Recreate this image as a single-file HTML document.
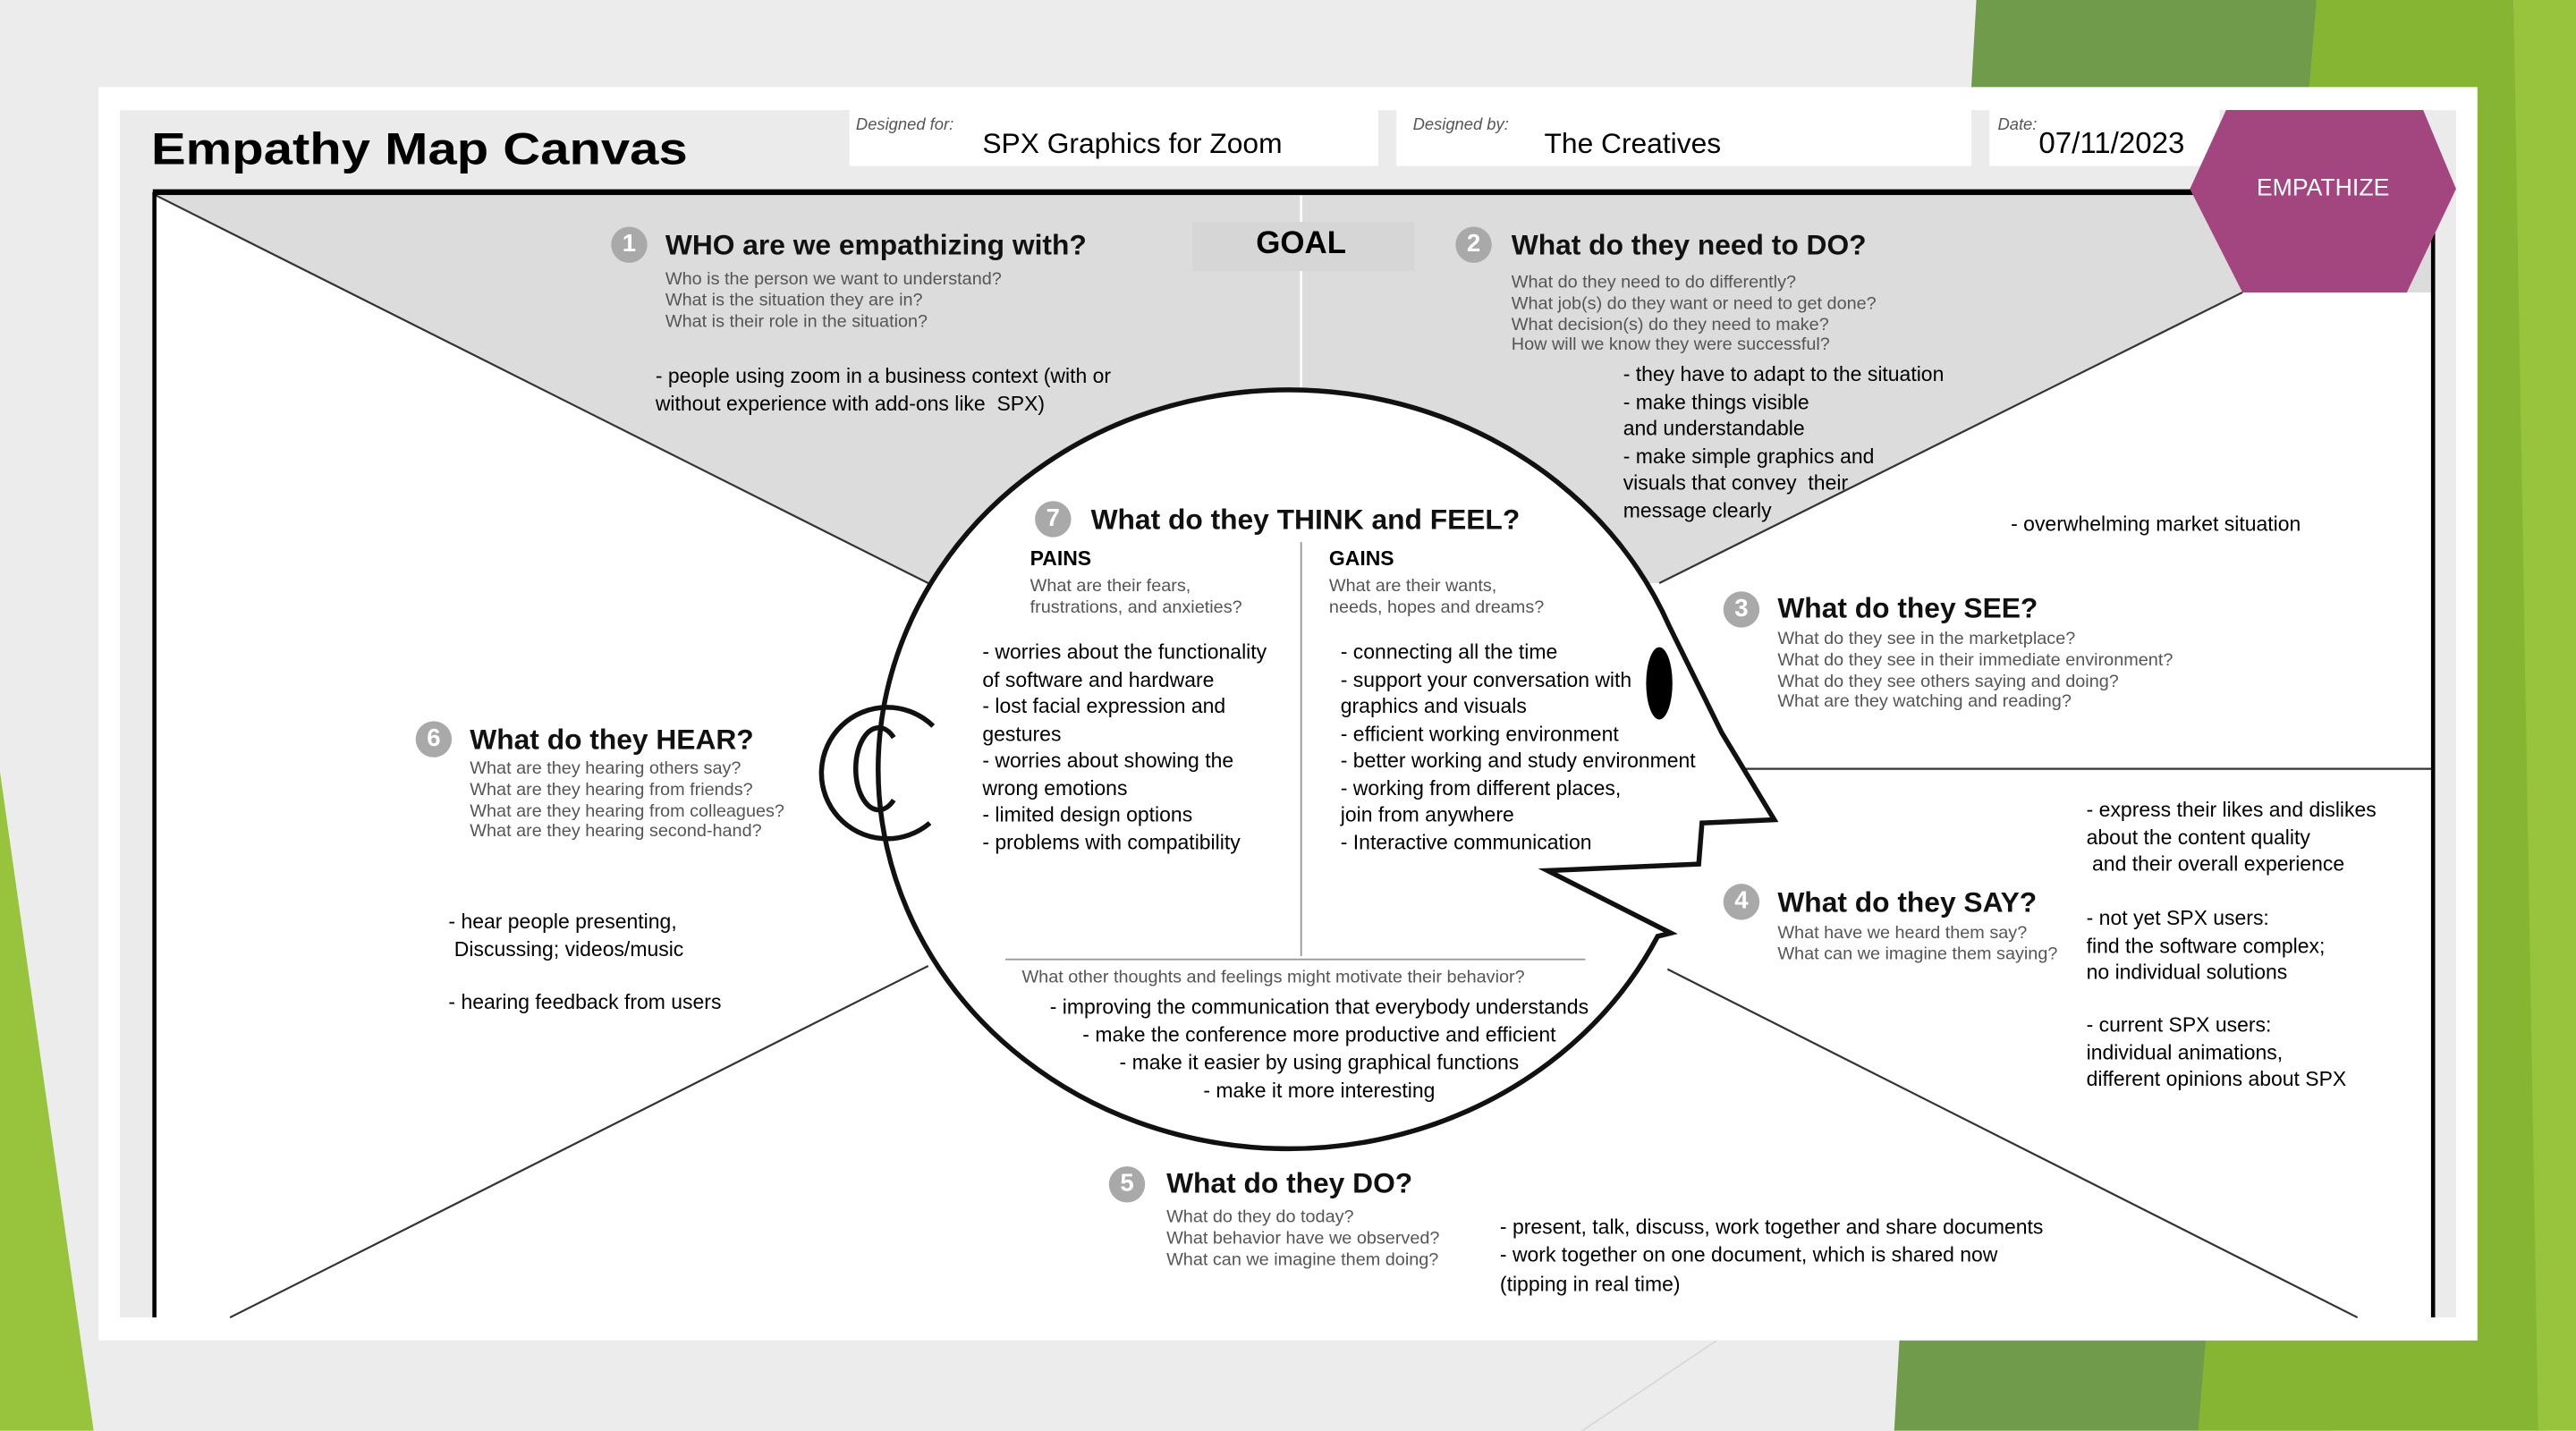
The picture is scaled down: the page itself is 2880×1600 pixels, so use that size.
<!DOCTYPE html>
<html><head><meta charset="utf-8"><style>
html,body{margin:0;padding:0;width:2880px;height:1599px;overflow:hidden;background:#ececec}
#s{position:absolute;left:0;top:0;width:1568px;height:871px;transform:scale(1.83673);transform-origin:0 0;font-family:"Liberation Sans",sans-serif}
.t{position:absolute;white-space:nowrap;line-height:13px}
.h{font-size:17.3px;font-weight:bold;color:#111;line-height:20px}
.q{font-size:10.8px;color:#555;line-height:12.8px}
.b{font-size:12.5px;color:#000;line-height:16.5px}
.n{position:absolute;width:22px;height:22px;border-radius:50%;background:#a9a9a9;color:#fff;font-weight:bold;font-size:15px;line-height:22px;text-align:center}
.lab{font-size:10px;font-style:italic;color:#555}
</style></head><body><div id="s">
<svg width="1568" height="871" style="position:absolute;left:0;top:0">
<polygon points="1203,0 1410,0 1420,871 1153,871" fill="#6f9b4b"/>
<polygon points="1410,0 1530,0 1550,871 1338,871" fill="#86b534"/>
<polygon points="1530,0 1568,0 1568,871 1545,871" fill="#97c43c"/>
<polygon points="0,470 57,871 0,871" fill="#97c43c"/>
<line x1="1045" y1="816" x2="963" y2="871" stroke="#d8d8d8" stroke-width="1"/>
<rect x="60" y="53" width="1448" height="763" fill="#fff"/>
<rect x="73" y="67" width="1422" height="735" fill="#ebebeb"/>
<rect x="517" y="67" width="322" height="34" fill="#fff"/>
<rect x="850" y="67" width="350" height="34" fill="#fff"/>
<rect x="1211" y="67" width="140" height="34" fill="#fff"/>
<rect x="94" y="118" width="1387" height="684" fill="#fff"/>
<polygon points="95,119 1480,119 1480,178 1365,178 1010,355 565,355" fill="#dcdcdc"/>
<line x1="792" y1="119" x2="792" y2="250" stroke="#fff" stroke-width="1.5"/>
<rect x="726" y="135" width="135" height="30" fill="#d6d6d6"/>
<line x1="95" y1="119" x2="565" y2="355" stroke="#333" stroke-width="1.2"/>
<line x1="1365" y1="178" x2="1010" y2="355" stroke="#333" stroke-width="1.2"/>
<line x1="565" y1="588" x2="140" y2="802" stroke="#333" stroke-width="1.2"/>
<line x1="1015" y1="590" x2="1435" y2="802" stroke="#333" stroke-width="1.2"/>
<line x1="1060" y1="468" x2="1480" y2="468" stroke="#333" stroke-width="1.2"/>
<path d="M1016,381 L1048,446 L1080,499 L1036,501 L1034,526 L942,530 L1017,568 L1009,570 A250,231 0 1 1 1016,381 Z" fill="#fff" stroke="#111" stroke-width="3" stroke-linejoin="miter"/>
<line x1="792" y1="330" x2="792" y2="582" stroke="#999" stroke-width="1"/>
<line x1="612" y1="584" x2="965" y2="584" stroke="#999" stroke-width="1"/>
<ellipse cx="1010" cy="416" rx="8" ry="22" fill="#000"/>
<path d="M568,442 A40,40 0 1 0 566,501" fill="none" stroke="#111" stroke-width="3"/>
<path d="M544,449 A14,25 0 1 0 544,487" fill="none" stroke="#111" stroke-width="3"/>
<line x1="93" y1="117" x2="1340" y2="117" stroke="#000" stroke-width="3.5"/>
<line x1="94" y1="117" x2="94" y2="802" stroke="#000" stroke-width="2.5"/>
<line x1="1481" y1="140" x2="1481" y2="802" stroke="#000" stroke-width="2.5"/>
<polygon points="1355,67 1475,67 1495,115 1465,178 1365,178 1333,115" fill="#a3467f"/>
</svg>
<div class="t" style="left:92px;top:75px;font-size:27px;font-weight:bold;line-height:32px;transform:scaleX(1.17);transform-origin:0 0">Empathy Map Canvas</div>
<div class="t lab" style="left:521px;top:70px">Designed for:</div>
<div class="t" style="left:598px;top:77px;font-size:17.3px;line-height:20px">SPX Graphics for Zoom</div>
<div class="t lab" style="left:860px;top:70px">Designed by:</div>
<div class="t" style="left:940px;top:77px;font-size:17.3px;line-height:20px">The Creatives</div>
<div class="t lab" style="left:1216px;top:70px">Date:</div>
<div class="t" style="left:1241px;top:77px;font-size:18px;line-height:20px">07/11/2023</div>
<div class="t" style="left:1333px;width:162px;text-align:center;top:106px;font-size:14.5px;line-height:18px;color:#fff">EMPATHIZE</div>

<div class="n" style="left:372px;top:138px">1</div>
<div class="t h" style="left:405px;top:139px">WHO are we empathizing with?</div>
<div class="t q" style="left:405px;top:164px">Who is the person we want to understand?<br>What is the situation they are in?<br>What is their role in the situation?</div>
<div class="t b" style="left:399px;top:221px">- people using zoom in a business context (with or<br>without experience with add-ons like&nbsp; SPX)</div>
<div class="t" style="left:726px;width:132px;text-align:center;top:138px;font-size:19px;font-weight:bold;line-height:22px">GOAL</div>

<div class="n" style="left:886px;top:138px">2</div>
<div class="t h" style="left:920px;top:139px">What do they need to DO?</div>
<div class="t q" style="left:920px;top:166px">What do they need to do differently?<br>What job(s) do they want or need to get done?<br>What decision(s) do they need to make?<br>How will we know they were successful?</div>
<div class="t b" style="left:988px;top:220px">- they have to adapt to the situation<br>- make things visible<br>and understandable<br>- make simple graphics and<br>visuals that convey&nbsp; their<br>message clearly</div>
<div class="t b" style="left:1224px;top:311px">- overwhelming market situation</div>

<div class="n" style="left:630px;top:305px">7</div>
<div class="t h" style="left:664px;top:306px">What do they THINK and FEEL?</div>
<div class="t" style="left:627px;top:334px;font-size:12.5px;font-weight:bold">PAINS</div>
<div class="t q" style="left:627px;top:351px">What are their fears,<br>frustrations, and anxieties?</div>
<div class="t" style="left:809px;top:334px;font-size:12.5px;font-weight:bold">GAINS</div>
<div class="t q" style="left:809px;top:351px">What are their wants,<br>needs, hopes and dreams?</div>
<div class="t b" style="left:598px;top:389px">- worries about the functionality<br>of software and hardware<br>- lost facial expression and<br>gestures<br>- worries about showing the<br>wrong emotions<br>- limited design options<br>- problems with compatibility</div>
<div class="t b" style="left:816px;top:389px">- connecting all the time<br>- support your conversation with<br>graphics and visuals<br>- efficient working environment<br>- better working and study environment<br>- working from different places,<br>join from anywhere<br>- Interactive communication</div>
<div class="t q" style="left:622px;top:589px">What other thoughts and feelings might motivate their behavior?</div>
<div class="t b" style="left:590px;width:426px;text-align:center;top:605px;line-height:17px">- improving the communication that everybody understands<br>- make the conference more productive and efficient<br>- make it easier by using graphical functions<br>- make it more interesting</div>

<div class="n" style="left:1049px;top:360px">3</div>
<div class="t h" style="left:1082px;top:360px">What do they SEE?</div>
<div class="t q" style="left:1082px;top:383px">What do they see in the marketplace?<br>What do they see in their immediate environment?<br>What do they see others saying and doing?<br>What are they watching and reading?</div>

<div class="n" style="left:253px;top:439px">6</div>
<div class="t h" style="left:286px;top:440px">What do they HEAR?</div>
<div class="t q" style="left:286px;top:462px">What are they hearing others say?<br>What are they hearing from friends?<br>What are they hearing from colleagues?<br>What are they hearing second-hand?</div>
<div class="t b" style="left:273px;top:553px">- hear people presenting,<br>&nbsp;Discussing; videos/music</div>
<div class="t b" style="left:273px;top:602px">- hearing feedback from users</div>

<div class="n" style="left:1049px;top:538px">4</div>
<div class="t h" style="left:1082px;top:539px">What do they SAY?</div>
<div class="t q" style="left:1082px;top:562px">What have we heard them say?<br>What can we imagine them saying?</div>
<div class="t b" style="left:1270px;top:485px">- express their likes and dislikes<br>about the content quality<br>&nbsp;and their overall experience</div>
<div class="t b" style="left:1270px;top:551px">- not yet SPX users:<br>find the software complex;<br>no individual solutions</div>
<div class="t b" style="left:1270px;top:616px">- current SPX users:<br>individual animations,<br>different opinions about SPX</div>

<div class="n" style="left:675px;top:710px">5</div>
<div class="t h" style="left:710px;top:710px">What do they DO?</div>
<div class="t q" style="left:710px;top:735px">What do they do today?<br>What behavior have we observed?<br>What can we imagine them doing?</div>
<div class="t b" style="left:913px;top:739px;line-height:17.3px">- present, talk, discuss, work together and share documents<br>- work together on one document, which is shared now<br>(tipping in real time)</div>
</div></body></html>
